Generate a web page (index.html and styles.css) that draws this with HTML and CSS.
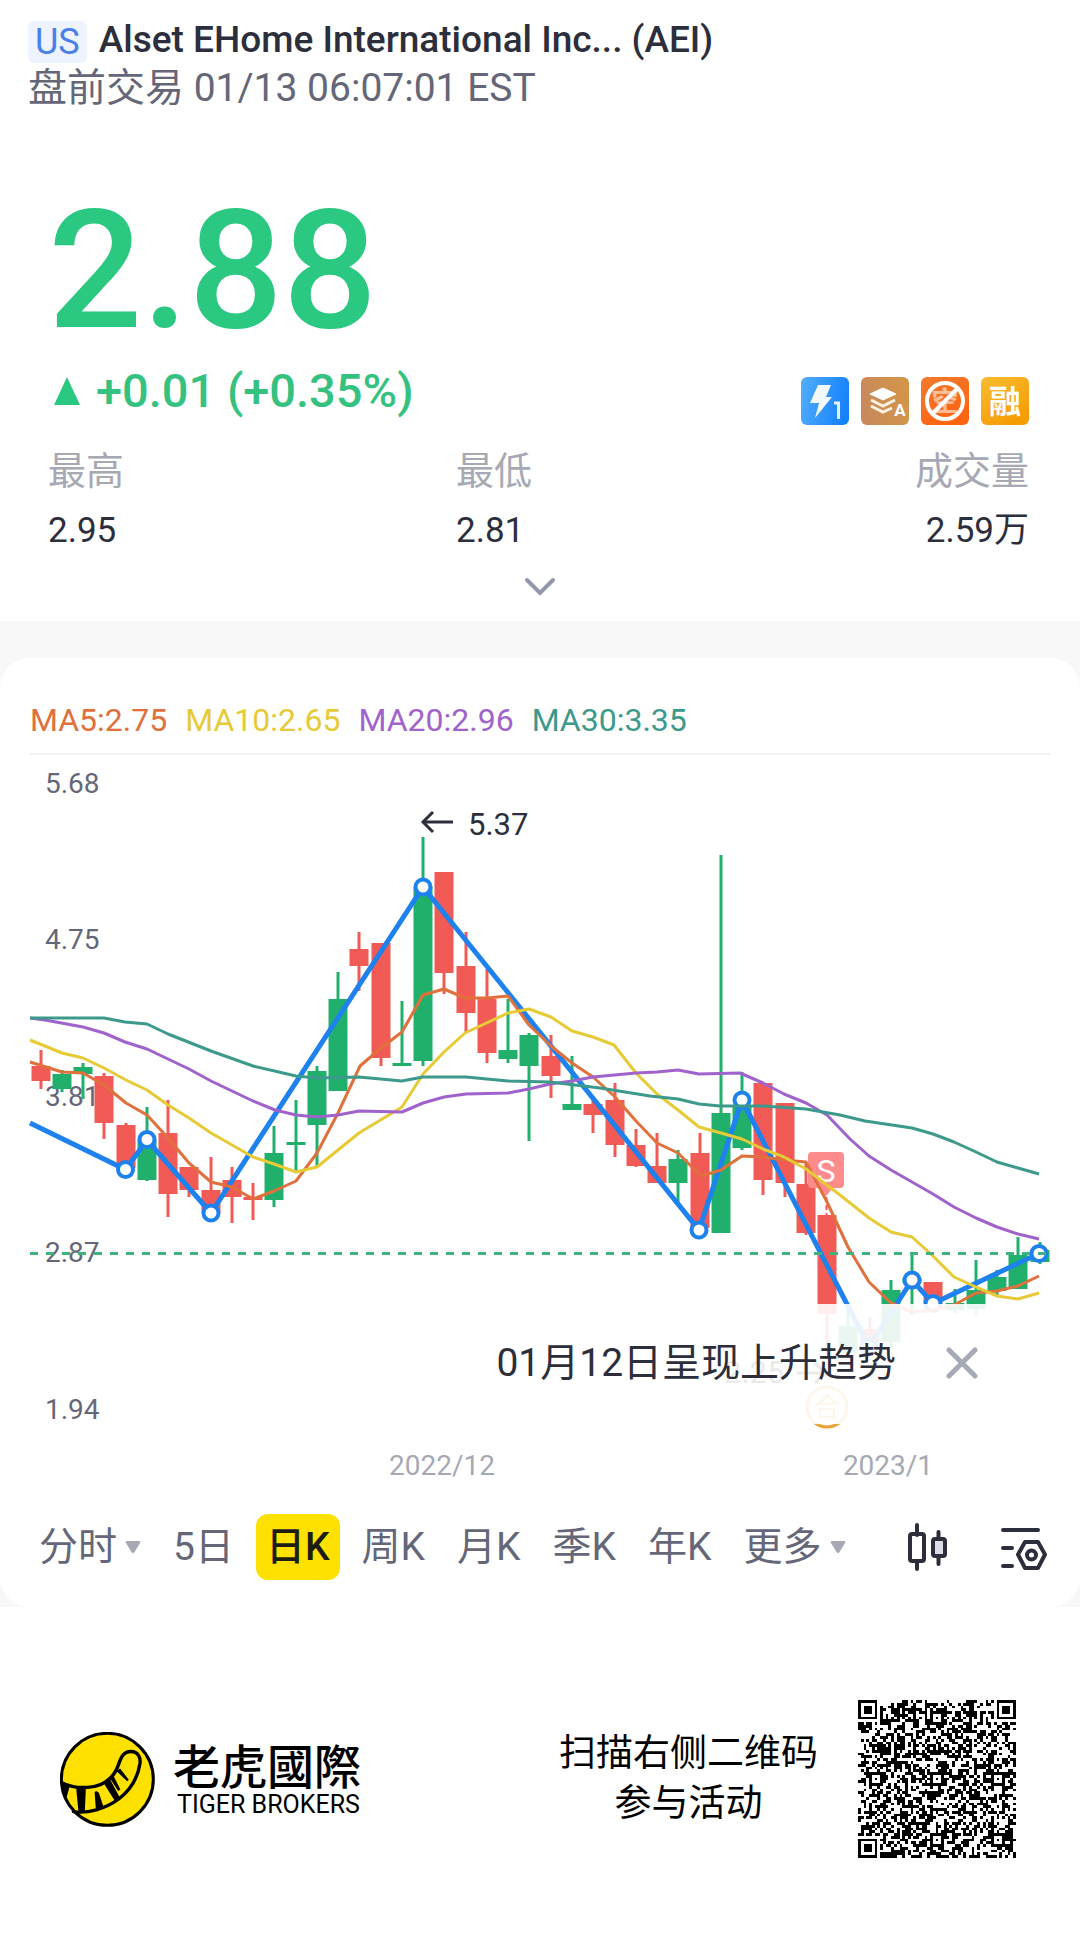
FILE: index.html
```html
<!DOCTYPE html>
<html lang="zh-CN">
<head>
<meta charset="utf-8">
<meta name="viewport" content="width=device-width, initial-scale=1">
<title>Alset EHome International Inc. (AEI)</title>
<link rel="stylesheet" href="styles.css">
</head>
<body>
<header class="head">
  <div class="title-row">
    <span class="market">US</span>
    <h1 class="name">Alset EHome International Inc... (AEI)</h1>
  </div>
  <p class="session">盘前交易 01/13 06:07:01 EST</p>
</header>

<section class="quote">
  <div class="price">2.88</div>
  <div class="change-row">
    <div class="change">
      <svg class="up" viewBox="0 0 26 28" aria-hidden="true"><path d="M13 0 26 28H0z"/></svg>
      <span>+0.01 (+0.35%)</span>
    </div>
    <div class="tags">
      <svg class="tag" viewBox="0 0 48 48">
        <defs>
          <linearGradient id="blue" x1="0" y1="0.3" x2="1" y2="0.5"><stop offset="0" stop-color="#4facfb"/><stop offset="1" stop-color="#1480fb"/></linearGradient>
          <linearGradient id="tan" x1="0" y1="0.6" x2="1" y2="0.4"><stop offset="0" stop-color="#c8895c"/><stop offset="1" stop-color="#d49549"/></linearGradient>
          <linearGradient id="orange" x1="0" y1="0" x2="0.5" y2="1"><stop offset="0" stop-color="#f27a2e"/><stop offset="1" stop-color="#ff6412"/></linearGradient>
          <linearGradient id="gold" x1="0" y1="0" x2="0.6" y2="1"><stop offset="0" stop-color="#f8bd30"/><stop offset="1" stop-color="#f69c05"/></linearGradient>
        </defs>
        <rect width="48" height="48" rx="6" fill="url(#blue)"/>
        <path d="M17 8h13l-5 12h6L14 41l4-15H9z" fill="#f2f9ff"/>
        <path d="M33 26h4.500v16" fill="none" stroke="#e3f0ff" stroke-width="3"/>
      </svg>
      <svg class="tag" viewBox="0 0 48 48">
        <rect width="48" height="48" rx="6" fill="url(#tan)"/>
        <path d="M22 11 35 17 22 23 9 17z" fill="#fff" stroke="#fff" stroke-linejoin="round"/>
        <path d="m10 23 12 6 12-6M10 29l12 6 9-4" fill="none" stroke="#fff3e6" stroke-width="3"/>
        <text x="39" y="39" class="tag-letter">A</text>
      </svg>
      <svg class="tag" viewBox="0 0 48 48">
        <rect width="48" height="48" rx="6" fill="url(#orange)"/>
        <text x="24" y="34" class="tag-short">空</text>
        <circle cx="24" cy="24" r="18" fill="none" stroke="#fff" stroke-width="4"/>
        <path d="M11 37 37 11" stroke="#fff" stroke-width="4"/>
      </svg>
      <svg class="tag" viewBox="0 0 48 48">
        <rect width="48" height="48" rx="6" fill="url(#gold)"/>
        <text x="24" y="36" class="tag-margin">融</text>
      </svg>
    </div>
  </div>
  <dl class="stats">
    <div class="stat"><dt>最高</dt><dd>2.95</dd></div>
    <div class="stat"><dt>最低</dt><dd>2.81</dd></div>
    <div class="stat"><dt>成交量</dt><dd>2.59万</dd></div>
  </dl>
  <button class="expand" type="button" aria-label="展开">
    <svg viewBox="0 0 32 20"><path d="m3 3 13 13L29 3" fill="none" stroke="#9297ad" stroke-width="4" stroke-linecap="round"/></svg>
  </button>
</section>

<main class="band">
  <section class="card">
    <div class="legend">
      <span class="ma5">MA5:2.75</span>
      <span class="ma10">MA10:2.65</span>
      <span class="ma20">MA20:2.96</span>
      <span class="ma30">MA30:3.35</span>
    </div>
    <div class="chart">
      <svg class="plot" viewBox="0 755 1080 727" role="img" aria-label="日K">
        <g class="axis">
          <text x="45" y="793">5.68</text>
          <text x="45" y="949">4.75</text>
          <text x="45" y="1106">3.81</text>
          <text x="45" y="1262">2.87</text>
          <text x="45" y="1419">1.94</text>
        </g>
        <g class="dates">
          <text x="442" y="1475">2022/12</text>
          <text x="888" y="1475">2023/1</text>
        </g>
        <g id="candles"></g>
        <g class="sell">
          <path d="M812 1152h28a4 4 0 0 1 4 4v28a4 4 0 0 1-4 4h-7l-7 8-7-8h-7a4 4 0 0 1-4-4v-28a4 4 0 0 1 4-4z"/>
          <text x="826" y="1182">S</text>
        </g>
        <path d="M826.500 1197v18" stroke="#f25a55" stroke-width="2" stroke-dasharray="5 3"/>
        <polyline class="trend" points="30,1123 125.500,1169.500 147,1140 211,1213 423,887 699,1230 742,1100 869,1347 912,1280 933,1303.500 1039,1253.500"/>
        <g class="nodes">
          <circle cx="125.500" cy="1169.500" r="7.500"/><circle cx="147" cy="1139.500" r="7.500"/><circle cx="211" cy="1213" r="7.500"/><circle cx="423" cy="887" r="7.500"/><circle cx="699" cy="1230" r="7.500"/><circle cx="742" cy="1100" r="7.500"/><circle cx="869" cy="1347" r="7.500"/><circle cx="912" cy="1280" r="7.500"/><circle cx="933" cy="1303.500" r="7.500"/><circle cx="1039" cy="1253.500" r="7.500"/>
        </g>
        <polyline class="line l5" points="30,1062 62,1072 83,1073 104,1085 126,1103 147,1115 168,1138 189,1163 211,1182 232,1187 253,1199 274,1191 296,1181 317,1153 338,1113 360,1066 381,1048 402,1032 423,995 444,989 465,998 487,998 508,996 529,1025 551,1046 572,1063 593,1077 614,1096 636,1121 657,1143 678,1153 701,1176 721,1170 742,1156 763,1157 784,1160 806,1162 827,1202 848,1247 869,1282 891,1303 912,1312 933,1310 954,1305 976,1293 997,1291 1018,1286 1039,1276"/>
        <polyline class="line l10" points="30,1040 62,1053 83,1058 104,1068 126,1080 147,1090 168,1105 189,1118 211,1133 253,1157 274,1164 296,1172 317,1167 338,1150 359,1133 402,1107 423,1074 444,1052 465,1033 508,1013 529,1009 551,1017 572,1031 593,1037 614,1045 636,1073 657,1094 678,1110 699,1127 721,1133 742,1139 763,1149 784,1157 806,1169 840,1195 869,1218 891,1232 912,1237 933,1256 954,1277 976,1287 997,1296 1018,1299 1039,1293"/>
        <polyline class="line l20" points="30,1018 45,1020 83,1027 104,1033 125,1042 147,1049 189,1069 211,1081 253,1101 275,1110 296,1115 317,1117 338,1115 359,1111 402,1112 423,1103 444,1097 466,1094 508,1093 529,1089 550,1084 572,1081 593,1077 636,1073 657,1072 678,1070 699,1074 740,1073 763,1083 784,1094 806,1103 827,1115 850,1139 869,1156 891,1170 933,1194 954,1207 976,1218 997,1227 1018,1234 1039,1239"/>
        <polyline class="line l30" points="30,1018 104,1018 125,1022 147,1024 168,1034 211,1051 253,1066 296,1076 317,1078 359,1077 402,1081 423,1077 466,1077 508,1081 550,1082 600,1088 650,1096 678,1099 699,1104 720,1106 763,1106 806,1109 840,1115 865,1121 912,1128 933,1134 954,1142 976,1152 997,1162 1018,1168 1039,1174"/>
        <path d="M30 1253.500H1050" stroke="#3fb27f" stroke-width="3" stroke-dasharray="8 8"/>
        <g class="peak">
          <path d="M453 822h-30m10-10-10 10 10 10"/>
          <text x="468" y="835">5.37</text>
          <path d="M797 1373h28m-10-10 10 10-10 10"/>
          <text x="724" y="1383">2.25</text>
        </g>
        <g class="combine">
          <circle cx="827" cy="1407" r="20"/>
          <text x="827" y="1417">合</text>
        </g>
      </svg>
      <div class="notice">
        <span>01月12日呈现上升趋势</span>
        <button class="close" type="button" aria-label="关闭">
          <svg viewBox="0 0 32 32"><path d="m3 3 26 26M29 3 3 29" stroke="#a6aab6" stroke-width="5" stroke-linecap="round"/></svg>
        </button>
      </div>
    </div>
    <nav class="periods">
      <button type="button" class="period">分时<svg class="caret" viewBox="0 0 16 12"><path d="M2 0h12q2 0 1 2L9.500 11q-1.500 2-3 0L1 2Q0 0 2 0z"/></svg></button>
      <button type="button" class="period">5日</button>
      <button type="button" class="period active">日K</button>
      <button type="button" class="period">周K</button>
      <button type="button" class="period">月K</button>
      <button type="button" class="period">季K</button>
      <button type="button" class="period">年K</button>
      <button type="button" class="period">更多<svg class="caret" viewBox="0 0 16 12"><path d="M2 0h12q2 0 1 2L9.500 11q-1.500 2-3 0L1 2Q0 0 2 0z"/></svg></button>
      <button type="button" class="tool" aria-label="K线样式">
        <svg viewBox="0 0 48 48"><g fill="none" stroke="#2c2e3b" stroke-width="4" stroke-linecap="round"><path d="M13 2v10M13 38v8M34.500 9v7M34.500 34v7"/><rect x="6" y="11" width="14" height="27" rx="2"/><rect x="29" y="16" width="12" height="17" rx="2" fill="#dcdce4"/></g></svg>
      </button>
      <button type="button" class="tool" aria-label="设置">
        <svg viewBox="0 0 48 48"><g fill="none" stroke="#2c2e3b" stroke-width="4" stroke-linecap="round" stroke-linejoin="round"><path d="M3 7h35M3 25h9M3 43h9"/><path d="M25 19h13l7 12.500L38 45H25l-7-13.500z"/><circle cx="31.500" cy="32" r="4.500"/></g></svg>
      </button>
    </nav>
  </section>
</main>

<footer class="foot">
  <svg class="logo" viewBox="0 0 283 283" aria-hidden="true">
    <circle cx="141" cy="141" r="137" fill="#ffe100" stroke="#000" stroke-width="9"/>
    <g fill="none" stroke="#000" stroke-width="10" stroke-linecap="round">
      <path d="M5 151Q40 168 82 165C128 162 160 138 174 98 182 74 190 58 211 58c22 0 30 18 27 37-6 38-25 75-62 104-40 30-95 45-136 38"/>
    </g>
    <path d="M3 150 29 161 19 197 8 180zM48 165l29 1-3 71H55zM103 178q8-4 13 4l14 42-23 8zM128 149l18-14 32 60-14 11zM149 138l11-6 20 39-7 5zM168 116l11-7 26 33-5 5z"/>
  </svg>
  <div class="brand">
    <span class="brand-cn" lang="zh-Hant">老虎國際</span>
    <span class="brand-en">TIGER BROKERS</span>
  </div>
  <p class="scan">扫描右侧二维码<br>参与活动</p>
  <svg class="qr" viewBox="0 0 57 57" shape-rendering="crispEdges" role="img" aria-label="二维码"><path id="qr"/></svg>
</footer>
<script src="chart.js"></script>
</body>
</html>
```
FILE: styles.css
```css
* { box-sizing: border-box; }
body {
  margin: 0;
  background: #fff;
  color: #2c2e3b;
  font-family: Roboto, "Noto Sans CJK SC", sans-serif;
}
h1, p, dl, dd { margin: 0; }
button {
  border: 0;
  padding: 0;
  background: none;
  font: inherit;
  color: inherit;
}
svg { display: block; }

.head { padding: 16px 28px 0; }
.title-row { display: flex; align-items: center; gap: 12px; }
.market {
  margin-top: 5px;
  padding: 0 7px;
  border-radius: 6px;
  background: #eef4ff;
  color: #4a80e8;
  font-size: 36px;
  line-height: 42px;
}
.name { font-size: 37px; line-height: 47px; font-weight: 500; }
.session { color: #656779; font-size: 39px; line-height: 50px; }

.quote { padding: 72px 48px 24px; }
.price {
  color: #2ac880;
  font-size: 166px;
  line-height: 172px;
  font-weight: 500;
}
.change-row { display: flex; justify-content: space-between; align-items: center; padding: 0 3px 0 6px; }
.change {
  display: flex;
  align-items: center;
  gap: 16px;
  color: #35c280;
  font-size: 47px;
  line-height: 64px;
  font-weight: 500;
}
.up { width: 26px; height: 28px; fill: #2ac880; }
.tags { display: flex; gap: 12px; padding-top: 20px; }
.tag { width: 48px; height: 48px; }
.tag text { text-anchor: middle; fill: #fff; }
.tag-letter { font-size: 17px; font-weight: 700; }
.tag-short { font-size: 27px; font-weight: 700; opacity: 0.55; }
.tag-margin { font-size: 32px; font-weight: 700; }

.stats { display: grid; grid-template-columns: 408px 1fr auto; padding: 18px 3px 0 0; }
.stat dt { color: #a6a9b4; font-size: 38px; line-height: 56px; }
.stat dd { font-size: 35px; line-height: 64px; }
.stat:last-child { text-align: right; }
.expand { display: block; margin: 14px auto 0; }
.expand svg { width: 32px; height: 20px; }

.band { padding-top: 37px; background: #f8f8f8; }
.card { border-radius: 30px; background: #fff; padding-bottom: 27px; }
.legend {
  display: flex;
  gap: 18px;
  margin: 0 30px;
  padding: 38px 0 9px;
  border-bottom: 2px solid #f2f2f4;
  font-size: 32px;
  line-height: 48px;
}
.ma5 { color: #e0703c; }
.ma10 { color: #e6ca36; }
.ma20 { color: #a063cc; }
.ma30 { color: #3c998b; }

.chart { position: relative; }
.plot { width: 100%; }
.axis { fill: #656779; font-size: 28px; }
.dates { fill: #a6a9b4; font-size: 28px; text-anchor: middle; }
.up-bar { fill: #20b06c; stroke: #20b06c; }
.down-bar { fill: #f25a55; stroke: #f25a55; }
.line { fill: none; stroke-width: 3; stroke-linejoin: round; }
.l5 { stroke: #e0703c; }
.l10 { stroke: #e6ca36; }
.l20 { stroke: #a063cc; }
.l30 { stroke: #3c998b; }
.trend { fill: none; stroke: #1e82ee; stroke-width: 5; }
.nodes { fill: #fff; stroke: #1e82ee; stroke-width: 4; }
.sell path { fill: #ff8c8c; }
.sell text { fill: #fff; font-size: 32px; text-anchor: middle; }
.peak path { fill: none; stroke: #2c2e3b; stroke-width: 3; }
.peak text { fill: #2c2e3b; font-size: 31px; }
.combine circle { fill: none; stroke: #e8a33a; stroke-width: 3; }
.combine text { fill: #e8a33a; font-size: 27px; text-anchor: middle; }
.notice {
  position: absolute;
  top: 75.5%;
  right: 30px;
  left: 43%;
  height: 120px;
  display: flex;
  justify-content: space-between;
  align-items: center;
  padding: 0 72px 2px 32px;
  background: rgba(255, 255, 255, 0.9);
  font-size: 39px;
  line-height: 48px;
}
.close svg { width: 32px; height: 32px; }

.periods { display: flex; align-items: center; gap: 12px; padding: 32px 32px 0 29px; }
.period {
  display: flex;
  align-items: center;
  gap: 8px;
  padding: 0 10px;
  border-radius: 12px;
  color: #656779;
  font-size: 39px;
  line-height: 66px;
  white-space: nowrap;
}
.active { background: #ffe100; color: #1d1d14; font-weight: 500; }
.caret { width: 16px; height: 12px; fill: #a6a9b4; }
.tool svg { width: 48px; height: 48px; }
.tool { margin-left: auto; }

.foot { display: flex; align-items: center; padding: 93px 64px 94px 60px; }
.logo { width: 95px; height: 95px; }
.brand { display: flex; flex-direction: column; margin-left: 18px; color: #000; }
.brand-cn { font-family: "Noto Sans CJK TC", sans-serif; font-size: 47px; line-height: 52px; font-weight: 500; }
.brand-en { padding-left: 4px; font-size: 25px; line-height: 30px; }
.scan { margin: 0 40px 0 auto; color: #000; font-size: 37px; line-height: 50px; text-align: center; }
.qr { width: 158px; height: 158px; }
```
FILE: chart.js
```js
// Each candle: direction (1 up, 0 down), body top, body bottom, wick top, wick bottom.
const candles = [
  [0,1066,1081,1050,1089],[1,1074,1089,1070,1092],[1,1067,1074,1063,1099],[0,1076,1123,1073,1139],
  [0,1125,1168,1123,1168],[1,1140,1180,1107,1181],[0,1133,1194,1100,1217],[0,1167,1190,1167,1197],
  [0,1190,1213,1157,1213],[0,1180,1197,1167,1223],[0,1197,1200,1183,1220],[1,1153,1200,1126,1207],
  [1,1142,1145,1100,1172],[1,1071,1125,1066,1167],[1,999,1091,972,1091],[0,949,966,932,991],
  [0,943,1058,943,1066],[1,1063,1066,1001,1066],[1,887,1061,837,1066],[0,872,973,872,994],
  [0,966,1013,932,1032],[0,999,1053,969,1063],[1,1050,1059,999,1063],[1,1035,1066,1033,1141],
  [0,1056,1076,1035,1098],[1,1104,1110,1056,1110],[0,1104,1115,1100,1133],[0,1100,1145,1083,1157],
  [0,1145,1166,1129,1167],[0,1166,1183,1133,1183],[1,1159,1183,1150,1203],[0,1153,1228,1133,1228],
  [1,1113,1233,855,1233],[1,1105,1148,1072,1150],[0,1083,1180,1083,1195],[0,1103,1183,1103,1197],
  [0,1184,1233,1162,1235],[0,1215,1314,1215,1360],[1,1326,1353,1310,1358],[0,1329,1342,1317,1350],
  [1,1290,1342,1280,1347],[1,1278,1283,1253,1315],[0,1282,1303,1282,1303],[1,1303,1310,1289,1313],
  [1,1290,1309,1260,1315],[1,1277,1291,1270,1297],[1,1255,1289,1237,1289],[1,1250,1262,1242,1264]
];
const step = 21.26;
document.getElementById('candles').innerHTML = candles.map(([up, top, bottom, high, low], i) => {
  const x = Math.round(40.5 + i * step);
  return `<g class="${up ? 'up-bar' : 'down-bar'}"><path stroke-width="3" d="M${x} ${high}V${low}"/>` +
    `<rect stroke="none" x="${x - 9.5}" y="${top}" width="19" height="${bottom - top}"/></g>`;
}).join('');

// QR symbol: 57 modules, finder and alignment squares over the data area.
const size = 57;
const square = (r, c, cy, cx) => Math.max(Math.abs(r - cy), Math.abs(c - cx));
let seed = 20230113;
let d = '';
for (let r = 0; r < size; r++) {
  for (let c = 0; c < size; c++) {
    seed = (seed * 1103515245 + 12345) % 2147483648;
    let dark = seed / 2147483648 < 0.5;
    if (r === 6 || c === 6) dark = (r + c) % 2 === 0;
    for (const [y, x] of [[6, 28], [28, 6], [28, 28], [28, 50], [50, 28], [50, 50]]) {
      const k = square(r, c, y, x);
      if (k <= 2) dark = k !== 1;
    }
    for (const [y, x] of [[3, 3], [3, 53], [53, 3]]) {
      const k = square(r, c, y, x);
      if (k <= 4) dark = k !== 2 && k !== 4;
    }
    if (dark) d += `M${c} ${r}h1v1h-1z`;
  }
}
document.getElementById('qr').setAttribute('d', d);
```
